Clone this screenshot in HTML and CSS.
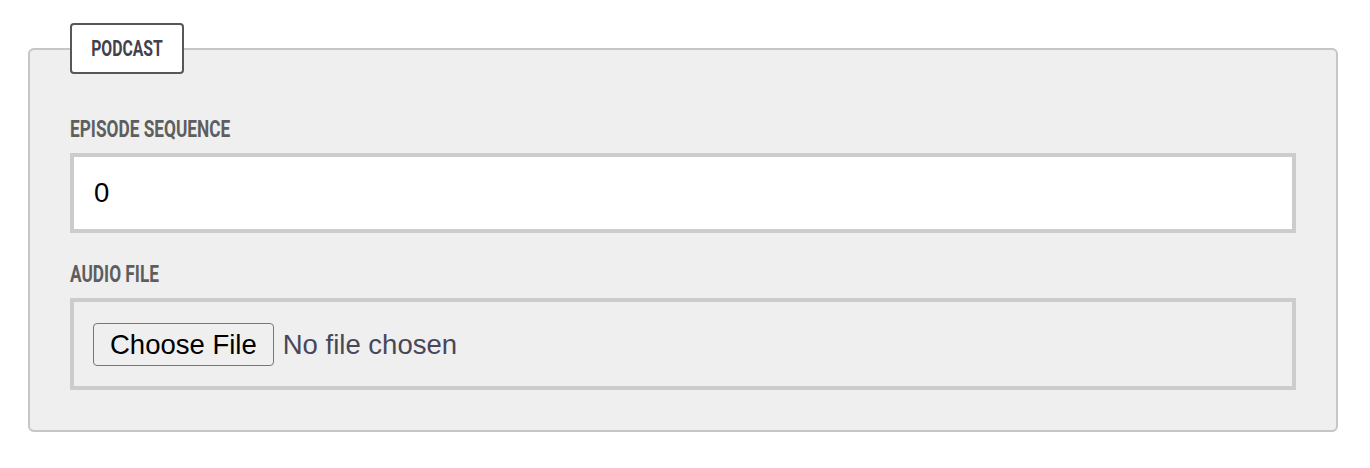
FILE: index.html
```html
<!DOCTYPE html>
<html lang="en">
<head>
  <meta charset="UTF-8" />
  <meta name="viewport" content="width=device-width, initial-scale=1.0" />
  <title>Podcast episode</title>
  <link rel="stylesheet" href="styles.css">
</head>
<body>
  <form class="page">
    <fieldset class="panel">
      <legend class="panel-title"><span>Podcast</span></legend>

      <div class="field">
        <label class="field-label" for="episodeSequence"><span>Episode sequence</span></label>
        <input class="field-input" type="text" id="episodeSequence" value="0" />
      </div>

      <div class="field">
        <label class="field-label" for="audioFile"><span>Audio file</span></label>
        <div class="file-box">
          <input class="file-input" type="file" id="audioFile" />
        </div>
      </div>
    </fieldset>
  </form>
</body>
</html>
```

FILE: styles.css
```css
:root {
  --panel-bg: #efefef;
  --panel-border: #c6c6c6;
  --field-border: #cccccc;
  --label-color: #5e5e5e;
  --title-color: #43414e;
}

body {
  margin: 0;
  background: #fff;
  font-family: "Liberation Sans", Arial, sans-serif;
}

.page {
  padding: 23px 32px 0 28px;
}

.panel {
  margin: 0;
  padding: 43px 40px 40px;
  border: 2px solid var(--panel-border);
  border-radius: 6px;
  background: var(--panel-bg);
  min-width: 0;
}

.panel-title {
  box-sizing: border-box;
  width: 114px;
  height: 51px;
  padding: 0;
  border: 2px solid #575757;
  border-radius: 4px;
  background: #fff;
  color: var(--title-color);
  text-transform: uppercase;
  font-family: Roboto, sans-serif;
  font-weight: 700;
  font-size: 22.5px;
  line-height: 47px;
}

.panel-title span {
  display: block;
  text-align: center;
  transform: scaleX(0.7);
}

.field + .field {
  margin-top: 29px;
}

.field-label {
  display: block;
  margin-bottom: 12px;
  color: var(--label-color);
  text-transform: uppercase;
  font-family: Roboto, sans-serif;
  font-weight: 700;
  font-size: 24px;
  line-height: 24px;
  white-space: nowrap;
}

.field-label span {
  display: inline-block;
  transform: scaleX(0.72);
  transform-origin: left center;
}

.field-input {
  display: block;
  box-sizing: border-box;
  width: 100%;
  height: 80px;
  margin: 0;
  padding: 0 20px;
  border: 4px solid var(--field-border);
  border-radius: 0;
  background: #fff;
  color: #000;
  font-family: "Liberation Sans", Arial, sans-serif;
  font-size: 27.5px;
  outline: none;
}

.file-box {
  box-sizing: border-box;
  height: 92px;
  padding: 21px 20px 0 19px;
  border: 4px solid var(--field-border);
  background: var(--panel-bg);
}

.file-input {
  margin: 0;
  color: #484759;
  font-family: "Liberation Sans", Arial, sans-serif;
  font-size: 27.5px;
}

.file-input::file-selector-button {
  box-sizing: border-box;
  height: 43px;
  margin: 0 9px 0 0;
  padding: 0 16px;
  border: 1px solid #767676;
  border-radius: 4px;
  background: var(--panel-bg);
  color: #000;
  font-family: "Liberation Sans", Arial, sans-serif;
  font-size: 27.5px;
}
```
